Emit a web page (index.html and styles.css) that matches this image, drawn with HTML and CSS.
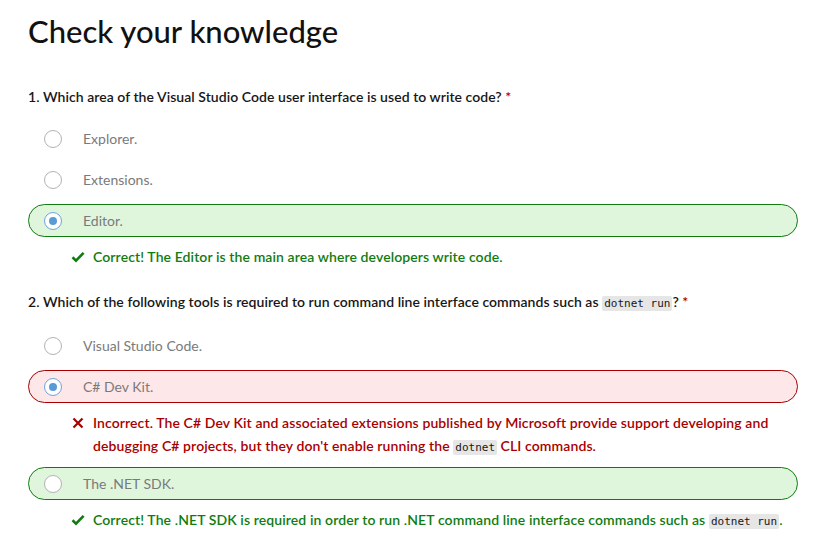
FILE: index.html
```html
<!DOCTYPE html>
<html lang="en">
<head>
<meta charset="utf-8">
<title>Check your knowledge</title>
<link rel="stylesheet" href="styles.css">
</head>
<body>
<main class="quiz">
  <h2 class="title">Check your knowledge</h2>

  <section class="question">
    <p class="prompt">1. Which area of the Visual Studio Code user interface is used to write code? <span class="req">*</span></p>
    <div class="options">
      <div class="option"><span class="radio"></span><span class="label">Explorer.</span></div>
      <div class="option"><span class="radio"></span><span class="label">Extensions.</span></div>
      <div class="option option-correct"><span class="radio radio-checked"></span><span class="label">Editor.</span></div>
      <div class="feedback feedback-correct">
        <svg class="fb-icon" viewBox="0 0 14 14" width="14" height="14"><path d="M1.5 7.2 L5 10.6 L12.6 2.8" fill="none" stroke="currentColor" stroke-width="2.6"/></svg>
        <span>Correct! The Editor is the main area where developers write code.</span>
      </div>
    </div>
  </section>

  <section class="question">
    <p class="prompt">2. Which of the following tools is required to run command line interface commands such as <code>dotnet run</code>? <span class="req">*</span></p>
    <div class="options">
      <div class="option"><span class="radio"></span><span class="label">Visual Studio Code.</span></div>
      <div class="option option-wrong"><span class="radio radio-checked"></span><span class="label">C# Dev Kit.</span></div>
      <div class="feedback feedback-wrong">
        <svg class="fb-icon" viewBox="0 0 14 14" width="14" height="14"><path d="M2.5 2.5 L11.5 11.5 M11.5 2.5 L2.5 11.5" fill="none" stroke="currentColor" stroke-width="2.2"/></svg>
        <span>Incorrect. The C# Dev Kit and associated extensions published by Microsoft provide support developing and debugging C# projects, but they don't enable running the <code>dotnet</code> CLI commands.</span>
      </div>
      <div class="option option-correct"><span class="radio"></span><span class="label">The .NET SDK.</span></div>
      <div class="feedback feedback-correct">
        <svg class="fb-icon" viewBox="0 0 14 14" width="14" height="14"><path d="M1.5 7.2 L5 10.6 L12.6 2.8" fill="none" stroke="currentColor" stroke-width="2.6"/></svg>
        <span>Correct! The .NET SDK is required in order to run .NET command line interface commands such as <code>dotnet run</code>.</span>
      </div>
    </div>
  </section>
</main>
</body>
</html>
```

FILE: styles.css
```css
html, body {
  margin: 0;
  padding: 0;
  background: #ffffff;
}
body {
  font-family: "Lato", "Noto Sans", sans-serif;
  color: #171717;
}
.quiz {
  padding: 0 22px 0 28px;
}
.title {
  margin: 0;
  padding-top: 11px;
  font-size: 31px;
  font-weight: 500;
  line-height: 40px;
  color: #111;
}
.question {
  margin-top: 34px;
}
.question + .question {
  margin-top: 22px;
}
.prompt {
  margin: 0;
  font-size: 14px;
  line-height: 23px;
  font-weight: 600;
  letter-spacing: 0.05px;
}
.req {
  color: #a80000;
}
.options {
  display: flex;
  flex-direction: column;
  gap: 8px;
  margin-top: 14px;
}
.option {
  display: flex;
  align-items: center;
  height: 33px;
  box-sizing: border-box;
  padding-left: 15px;
  border: 1px solid transparent;
  border-radius: 17px;
}
.option-correct {
  border-color: #107c10;
  background: #dff6dd;
}
.option-wrong {
  border-color: #a80000;
  background: #fde7e9;
}
.radio {
  width: 18px;
  height: 18px;
  box-sizing: border-box;
  border: 1px solid #b3b3b3;
  border-radius: 50%;
  background: #fff;
  flex: none;
  display: flex;
  align-items: center;
  justify-content: center;
}
.radio-checked {
  border-color: #6fa3dc;
}
.radio-checked::after {
  content: "";
  width: 8px;
  height: 8px;
  border-radius: 50%;
  background: #5b9bd5;
}
.label {
  margin-left: 21px;
  font-size: 14px;
  color: #7a7a7a;
}
.feedback {
  display: flex;
  align-items: flex-start;
  padding-left: 43px;
  font-size: 14px;
  line-height: 23px;
  font-weight: 600;
  letter-spacing: 0.1px;
}
.fb-icon {
  flex: none;
  margin-top: 5px;
  margin-right: 8px;
}
.feedback-correct {
  color: #107c10;
}
.feedback-wrong {
  color: #a80000;
}
code {
  font-family: "DejaVu Sans Mono", "Liberation Mono", monospace;
  font-size: 11px;
  font-weight: 400;
  letter-spacing: 0;
  color: #171717;
  background: #e6e6e6;
  padding: 1px 2px;
  border-radius: 2px;
}
```
